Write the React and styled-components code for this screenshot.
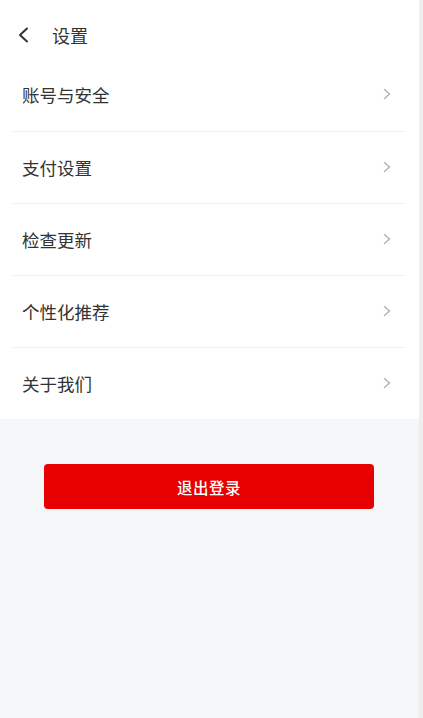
import React from "react";
import styled, { createGlobalStyle } from "styled-components";

const Global = createGlobalStyle`
  html, body { margin: 0; padding: 0; }
  body {
    font-family: "Noto Sans CJK SC", "Noto Sans", sans-serif;
    background: #f5f6f8;
  }
`;

const Frame = styled.div`
  display: flex;
  width: 423px;
  height: 718px;
  overflow: hidden;
`;

const Main = styled.div`
  flex: 1;
  display: flex;
  flex-direction: column;
  background: #f5f6f8;
`;

const ScrollTrack = styled.div`
  width: 4px;
  flex: none;
  background: #eeeeee;
`;

const Card = styled.div`
  background: #ffffff;
  display: flex;
  flex-direction: column;
`;

const Header = styled.div`
  height: 59px;
  display: flex;
  align-items: center;
  padding: 10px 0 0 17px;
  gap: 21px;
  box-sizing: border-box;
`;

const Title = styled.div`
  font-size: 18px;
  color: #333333;
  line-height: 1;
`;

const BackIcon = styled.svg`
  width: 14px;
  height: 16px;
`;

const List = styled.div`
  display: flex;
  flex-direction: column;
  margin: 0 13px 0 12px;
`;

const Row = styled.div`
  height: 72px;
  display: flex;
  align-items: center;
  justify-content: space-between;
  padding: 0 14px 0 10px;
  box-sizing: border-box;
  border-top: ${(p) => (p.$first ? "none" : "1px solid #f0f1f3")};
`;

const Label = styled.span`
  font-size: 17.5px;
  color: #333333;
  line-height: 1;
`;

const Chevron = styled.svg`
  width: 10px;
  height: 12px;
  margin-top: -2px;
`;

const ButtonArea = styled.div`
  display: flex;
  justify-content: center;
  padding: 45px 45px 0 44px;
`;

const LogoutButton = styled.button`
  width: 100%;
  height: 45px;
  border: none;
  border-radius: 4px;
  background: #e60000;
  color: #ffffff;
  font-family: "Noto Sans CJK SC", "Noto Sans", sans-serif;
  font-size: 15.5px;
  font-weight: 500;
  letter-spacing: 0.5px;
  cursor: pointer;
`;

const items = ["账号与安全", "支付设置", "检查更新", "个性化推荐", "关于我们"];

export default function App() {
  return (
    <>
      <Global />
      <Frame>
        <Main>
          <Card>
            <Header>
              <BackIcon viewBox="0 0 14 16" fill="none">
                <path d="M10 1.5 L3 8 L10 14.5" stroke="#333" strokeWidth="2" strokeLinecap="round" strokeLinejoin="round" />
              </BackIcon>
              <Title>设置</Title>
            </Header>
            <List>
              {items.map((t, i) => (
                <Row key={t} $first={i === 0}>
                  <Label>{t}</Label>
                  <Chevron viewBox="0 0 10 12" fill="none">
                    <path d="M2.5 1.5 L7.5 6 L2.5 10.5" stroke="#aeb2ba" strokeWidth="1.4" strokeLinecap="round" strokeLinejoin="round" />
                  </Chevron>
                </Row>
              ))}
            </List>
          </Card>
          <ButtonArea>
            <LogoutButton>退出登录</LogoutButton>
          </ButtonArea>
        </Main>
        <ScrollTrack />
      </Frame>
    </>
  );
}
